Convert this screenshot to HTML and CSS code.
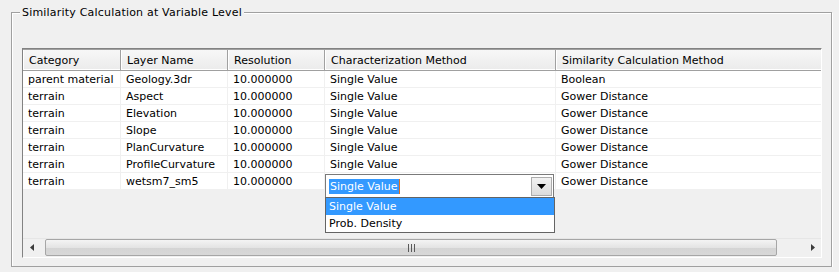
FILE: index.html
```html
<!DOCTYPE html>
<html>
<head>
    <title>Similarity Calculation</title>
    <link rel="stylesheet" href="styles.css">
</head>
<body>
    <div class="group">
        <div class="group-title">Similarity Calculation at Variable Level</div>
        <div class="grid-frame">
            <div class="grid-body">
                <table class="grid">
                    <colgroup>
                        <col style="width: 98px">
                        <col style="width: 107px">
                        <col style="width: 97px">
                        <col style="width: 231px">
                        <col style="width: 265px">
                    </colgroup>
                    <thead>
                        <tr>
                            <th>Category</th>
                            <th>Layer Name</th>
                            <th>Resolution</th>
                            <th>Characterization Method</th>
                            <th>Similarity Calculation Method</th>
                        </tr>
                    </thead>
                    <tbody>
                        <tr><td>parent material</td><td>Geology.3dr</td><td>10.000000</td><td>Single Value</td><td>Boolean</td></tr>
                        <tr><td>terrain</td><td>Aspect</td><td>10.000000</td><td>Single Value</td><td>Gower Distance</td></tr>
                        <tr><td>terrain</td><td>Elevation</td><td>10.000000</td><td>Single Value</td><td>Gower Distance</td></tr>
                        <tr><td>terrain</td><td>Slope</td><td>10.000000</td><td>Single Value</td><td>Gower Distance</td></tr>
                        <tr><td>terrain</td><td>PlanCurvature</td><td>10.000000</td><td>Single Value</td><td>Gower Distance</td></tr>
                        <tr><td>terrain</td><td>ProfileCurvature</td><td>10.000000</td><td>Single Value</td><td>Gower Distance</td></tr>
                        <tr>
                            <td>terrain</td>
                            <td>wetsm7_sm5</td>
                            <td>10.000000</td>
                            <td class="edit-cell">
                                <div class="combo">
                                    <span class="combo-text"><span class="combo-sel">Single Value</span><span class="caret"></span></span>
                                    <span class="combo-btn">
                                        <svg width="9" height="5" viewBox="0 0 9 5"><path d="M0 0h9L4.5 5z" fill="#000"/></svg>
                                    </span>
                                </div>
                                <div class="combo-list">
                                    <div class="combo-item selected">Single Value</div>
                                    <div class="combo-item">Prob. Density</div>
                                </div>
                            </td>
                            <td>Gower Distance</td>
                        </tr>
                    </tbody>
                </table>
            </div>
            <div class="hscroll">
                <div class="scroll-btn">
                    <svg width="4" height="7" viewBox="0 0 4 7"><path d="M4 0v7L0 3.5z" fill="#3c3c3c"/></svg>
                </div>
                <div class="scroll-track">
                    <div class="scroll-thumb">
                        <svg width="7" height="8" viewBox="0 0 7 8"><path d="M0.5 0v8M3.5 0v8M6.5 0v8" stroke="#5a5a5a" stroke-width="1"/></svg>
                    </div>
                </div>
                <div class="scroll-btn">
                    <svg width="4" height="7" viewBox="0 0 4 7"><path d="M0 0v7L4 3.5z" fill="#3c3c3c"/></svg>
                </div>
            </div>
        </div>
    </div>
</body>
</html>
```
FILE: styles.css
```css
body {
    margin: 0;
    padding: 12px 7px 0 11px;
    background-color: #f0f0f0;
    font-family: "DejaVu Sans", Tahoma, sans-serif;
    font-size: 11px;
    color: #000;
}
.group {
    height: 253px;
    border: 1px solid #a0a0a0;
    box-shadow: 1px 1px 0 #fff, inset 1px 1px 0 #fff;
    padding: 0 9px 0 10px;
}
.group-title {
    width: max-content;
    margin: -8px 0 0 -2px;
    padding: 0 2px;
    line-height: 15px;
    letter-spacing: 0.2px;
    background-color: #f0f0f0;
}
.grid-frame {
    margin-top: 28px;
    width: 798px;
    height: 208px;
    border: 1px solid #828282;
    border-right-color: #fff;
    border-bottom-color: #fff;
    display: flex;
    flex-direction: column;
}
.grid-body {
    flex: 1;
}
.grid {
    border-collapse: separate;
    border-spacing: 0;
    table-layout: fixed;
    width: 798px;
}
.grid th {
    padding: 2px 0 0 6px;
    line-height: 18px;
    text-align: left;
    font-weight: normal;
    background: linear-gradient(#f7f7f7, #ebebeb);
    border-top: 1px solid #a0a0a0;
    border-bottom: 1px solid #a0a0a0;
    border-right: 1px solid #a0a0a0;
    box-shadow: inset 1px 0 0 #fff, inset 0 -1px 0 #fff;
    white-space: nowrap;
    overflow: hidden;
}
.grid th:last-child {
    border-right: none;
}
.grid td {
    padding: 2px 0 0 5px;
    line-height: 14px;
    background-color: #fff;
    border-right: 1px solid #f0f0f0;
    border-bottom: 1px solid #f0f0f0;
    white-space: nowrap;
}
.grid td:last-child {
    border-right: none;
}
.edit-cell {
    position: relative;
}
.combo {
    position: absolute;
    left: 0;
    top: 1px;
    width: 227px;
    height: 22px;
    border: 1px solid #7a7a7a;
    background-color: #fff;
    display: flex;
    align-items: center;
    z-index: 2;
}
.combo-text {
    flex: 1;
    padding-left: 3px;
    display: flex;
    align-items: center;
}
.combo-sel {
    background-color: #3399ff;
    color: #fff;
    line-height: 15px;
    padding: 0 1px;
}
.caret {
    width: 1px;
    height: 15px;
    background-color: #e07020;
}
.combo-btn {
    width: 19px;
    height: 17px;
    margin-right: 1px;
    border: 1px solid #acacac;
    background: linear-gradient(#f2f2f2, #dcdcdc);
    display: flex;
    align-items: center;
    justify-content: center;
}
.combo-list {
    position: absolute;
    left: 0;
    top: 24px;
    width: 228px;
    border: 1px solid #646464;
    background-color: #fff;
    z-index: 2;
}
.combo-item {
    height: 17px;
    line-height: 17px;
    padding-left: 3px;
}
.combo-item.selected {
    background-color: #3399ff;
    color: #fff;
}
.hscroll {
    height: 17px;
    margin-bottom: 1px;
    display: flex;
    background-color: #f0f0f0;
    border-top: 1px solid #e6e6e6;
}
.scroll-btn {
    width: 17px;
    display: flex;
    align-items: center;
    justify-content: center;
}
.scroll-track {
    flex: 1;
    display: flex;
    align-items: center;
}
.scroll-thumb {
    margin-left: 5px;
    width: 730px;
    height: 15px;
    border: 1px solid #a6a6a6;
    border-radius: 2px;
    background: linear-gradient(#f4f4f4, #e4e4e4 50%, #d4d4d4 51%, #d8d8d8);
    display: flex;
    align-items: center;
    justify-content: center;
}
```
